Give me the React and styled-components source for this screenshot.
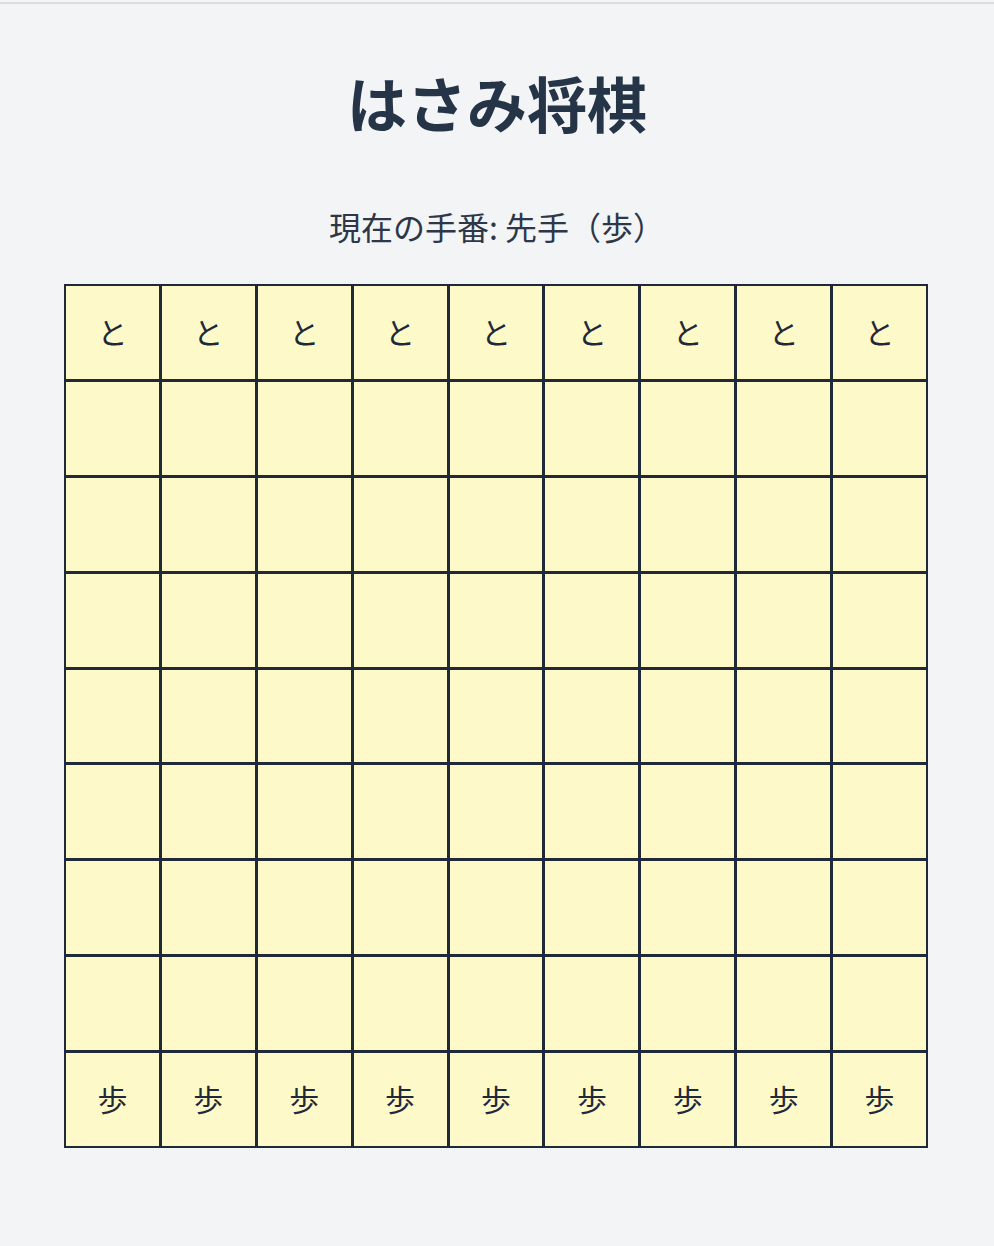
import React from 'react';
import styled, { createGlobalStyle } from 'styled-components';

const GlobalStyle = createGlobalStyle`
  html, body {
    margin: 0;
    padding: 0;
    background-color: #f3f4f6;
  }
  body {
    font-family: "Noto Sans CJK JP", "Noto Sans", sans-serif;
    color: #2d3748;
  }
`;

const TopRule = styled.div`
  height: 2px;
  margin-top: 2px;
  background-color: #dcdedc;
`;

const Page = styled.main`
  display: flex;
  flex-direction: column;
  align-items: center;
  padding-bottom: 98px;
`;

const Title = styled.h1`
  margin: 62px 0 0;
  font-size: 60px;
  font-weight: 700;
  line-height: 72px;
  color: #253447;
`;

const TurnInfo = styled.p`
  margin: 67px 0 0;
  font-size: 32px;
  line-height: 42px;
  color: #2d3748;
`;

const Board = styled.div`
  margin: 37px 2px 0 0;
  width: 864px;
  height: 864px;
  box-sizing: border-box;
  display: grid;
  grid-template-columns: repeat(9, 1fr);
  grid-template-rows: repeat(9, 1fr);
  gap: 3px;
  padding: 2px;
  background-color: #1f2937;
`;

const Cell = styled.div`
  display: flex;
  align-items: center;
  justify-content: center;
  padding-bottom: 3px;
  background-color: #fef9c8;
  font-size: 30px;
  color: #1f2937;
  cursor: ${props => (props.$piece ? 'pointer' : 'default')};
`;

const SIZE = 9;

const initialBoard = () =>
  Array.from({ length: SIZE }, (_, row) =>
    Array.from({ length: SIZE }, () => {
      if (row === 0) return 'と';
      if (row === SIZE - 1) return '歩';
      return null;
    })
  );

const App = () => {
  const board = initialBoard();

  return (
    <>
      <GlobalStyle />
      <TopRule />
      <Page>
        <Title>はさみ将棋</Title>
        <TurnInfo>現在の手番: 先手（歩）</TurnInfo>
        <Board>
          {board.map((row, r) =>
            row.map((piece, c) => (
              <Cell key={`${r}-${c}`} $piece={piece}>
                {piece}
              </Cell>
            ))
          )}
        </Board>
      </Page>
    </>
  );
};

export default App;
